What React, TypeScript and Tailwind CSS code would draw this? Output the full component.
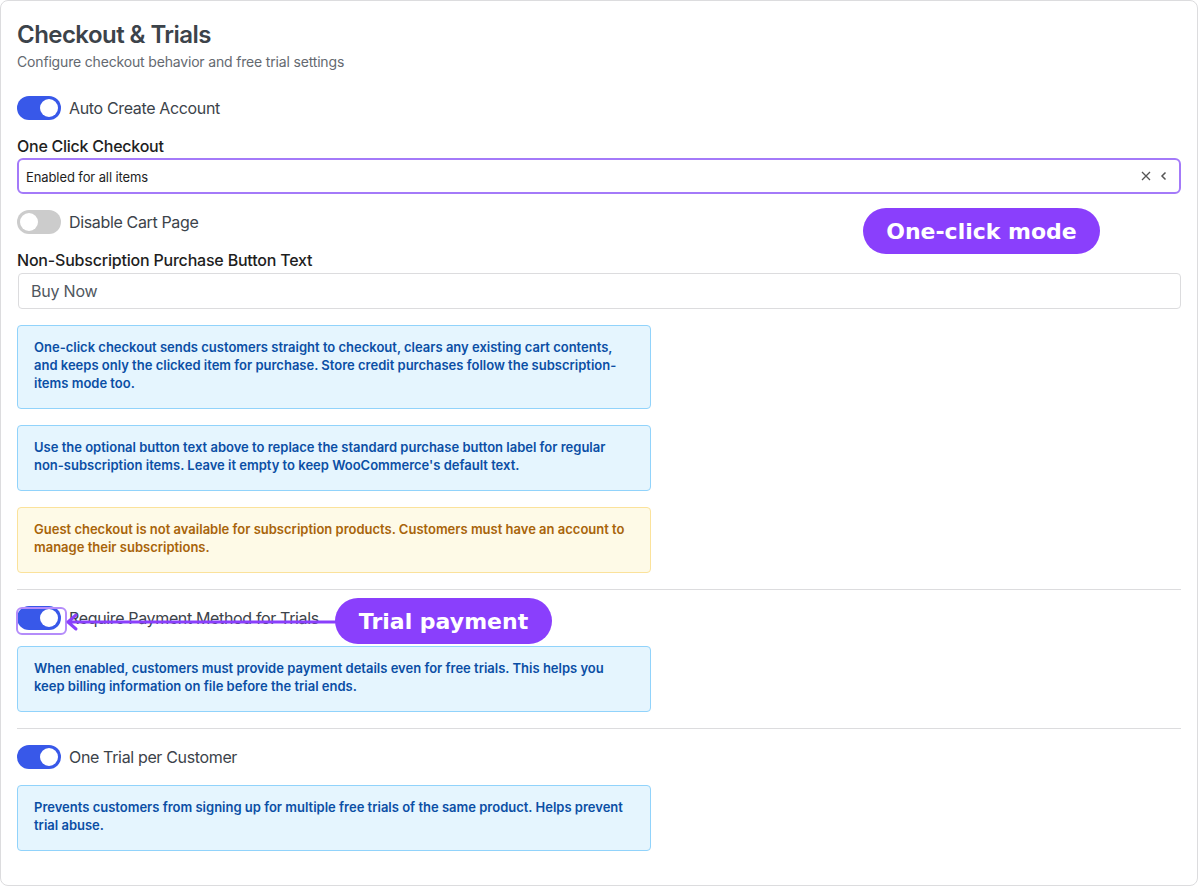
import React from "react";

const Toggle: React.FC<{ on: boolean }> = ({ on }) => (
  <span
    className={`relative inline-flex h-6 w-11 shrink-0 items-center rounded-full ${
      on ? "bg-[#3858e9]" : "bg-[#cccccc]"
    }`}
  >
    <span
      className={`absolute top-[3px] h-[18px] w-[18px] rounded-full bg-white ${
        on ? "left-[23px]" : "left-[3px]"
      }`}
    />
  </span>
);

const ToggleRow: React.FC<{ on: boolean; label: string }> = ({ on, label }) => (
  <div className="flex items-center gap-2">
    <Toggle on={on} />
    <span className="text-base leading-6 tracking-[-0.35px] text-[#3c434a]">{label}</span>
  </div>
);

const Notice: React.FC<{ tone?: "info" | "warn"; children: React.ReactNode }> = ({
  tone = "info",
  children,
}) => (
  <div
    className={`w-[634px] rounded border px-4 pt-3 pb-4 text-[13px] font-semibold leading-[18px] ${
      tone === "info"
        ? "border-[#91d3fb] bg-[#e5f5fe] text-[#0b4fa5]"
        : "border-[#fbe29b] bg-[#fefae7] text-[#a8640a]"
    }`}
  >
    {children}
  </div>
);

const Pill: React.FC<{ className: string; children: React.ReactNode }> = ({ className, children }) => (
  <div
    className={`absolute flex h-[46px] items-center justify-center rounded-full bg-[#8a3ffc] font-['DejaVu_Sans',sans-serif] text-[22px] font-bold text-white ${className}`}
  >
    {children}
  </div>
);

export default function App() {
  return (
    <div className="h-[886px] w-[1198px] bg-white font-['Inter',sans-serif]">
      <div className="relative h-full rounded-lg border border-[#dcdcde] px-4 pt-[18px]">
        {/* Header */}
        <h1 className="text-2xl font-semibold leading-8 tracking-[-0.55px] text-[#3c434a]">
          Checkout &amp; Trials
        </h1>
        <p className="mt-px text-sm leading-5 tracking-[-0.17px] text-[#646970]">
          Configure checkout behavior and free trial settings
        </p>

        <div className="mt-[24px] flex flex-col gap-4">
          <ToggleRow on label="Auto Create Account" />

          <div>
            <label className="mb-[2px] block text-base font-medium leading-5 tracking-[-0.25px] text-[#1e1e1e]">
              One Click Checkout
            </label>
            <div className="flex h-[36px] items-center justify-between rounded-md border-2 border-[#a47af9] pl-[7px] pr-3">
              <span className="pt-[3px] text-[13px] tracking-[-0.1px] text-[#1e1e1e]">Enabled for all items</span>
              <div className="flex items-center gap-[9px] text-[#555]">
                <svg width="10" height="10" viewBox="0 0 10 10" fill="none" stroke="currentColor" strokeWidth="1.3">
                  <path d="M1 1l8 8M9 1l-8 8" />
                </svg>
                <svg width="7" height="10" viewBox="0 0 7 10" fill="none" stroke="currentColor" strokeWidth="1.5">
                  <path d="M5.5 1.5L2 5l3.5 3.5" />
                </svg>
              </div>
            </div>
          </div>

          <ToggleRow on={false} label="Disable Cart Page" />

          <div>
            <label className="mb-[3px] block text-base font-medium leading-5 tracking-[-0.2px] text-[#1e1e1e]">
              Non-Subscription Purchase Button Text
            </label>
            <div className="ml-px flex h-[36px] items-center rounded border border-[#dcdcde] px-3">
              <span className="text-base tracking-[-0.2px] text-[#50575e]">Buy Now</span>
            </div>
          </div>

          <Notice>
            One-click checkout sends customers straight to checkout, clears any existing cart contents, and keeps only
            the clicked item for purchase. Store credit purchases follow the subscription-items mode too.
          </Notice>

          <Notice>
            Use the optional button text above to replace the standard purchase button label for regular
            non-subscription items. Leave it empty to keep WooCommerce's default text.
          </Notice>

          <Notice tone="warn">
            Guest checkout is not available for subscription products. Customers must have an account to manage their
            subscriptions.
          </Notice>

          <div className="h-px bg-[#dcdcde]" />

          <ToggleRow on label="Require Payment Method for Trials" />

          <Notice>
            When enabled, customers must provide payment details even for free trials. This helps you keep billing
            information on file before the trial ends.
          </Notice>

          <div className="h-px bg-[#dcdcde]" />

          <ToggleRow on label="One Trial per Customer" />

          <Notice>
            Prevents customers from signing up for multiple free trials of the same product. Helps prevent trial abuse.
          </Notice>
        </div>

        {/* Annotation overlays */}
        <Pill className="left-[862px] top-[207px] w-[237px]">One-click mode</Pill>

        <div className="absolute left-[15px] top-[606px] h-[28px] w-[51px] rounded-md border-2 border-[#b48cfa]" />
        <svg className="absolute left-[62px] top-[610px]" width="274" height="22" viewBox="0 0 274 22" fill="none">
          <path d="M272 11H6" stroke="#8a3ffc" strokeWidth="3" strokeLinecap="round" />
          <path d="M13 4L5 11l8 7" stroke="#8a3ffc" strokeWidth="3" strokeLinecap="round" strokeLinejoin="round" />
        </svg>
        <Pill className="left-[334px] top-[597px] w-[217px]">Trial payment</Pill>
      </div>
    </div>
  );
}
